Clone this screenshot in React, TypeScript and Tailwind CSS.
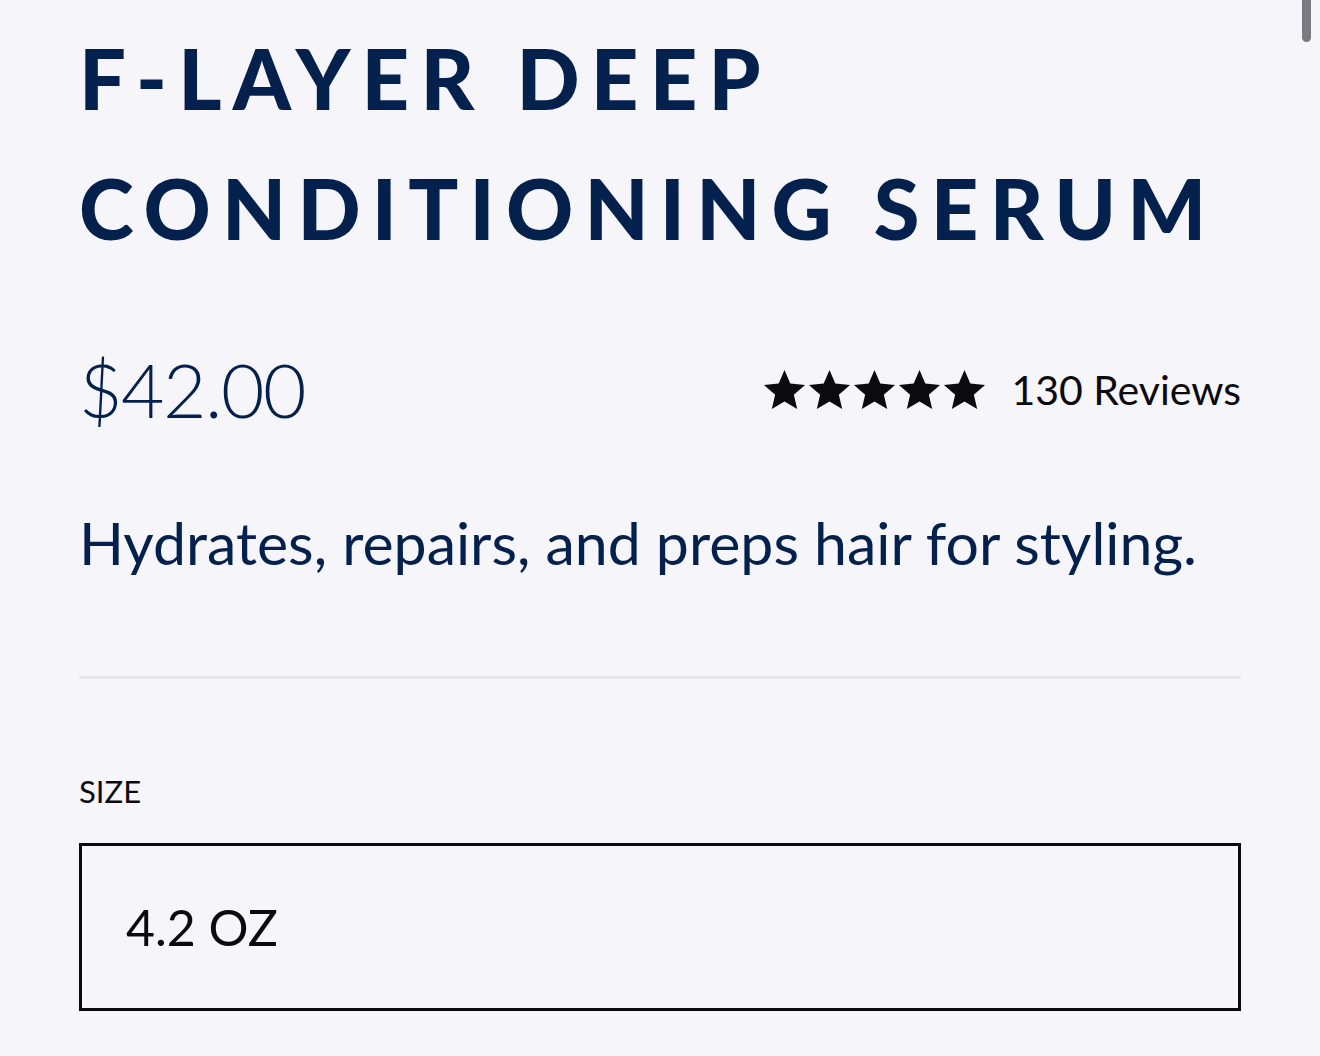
import React from "react";

const Star = () => (
  <svg viewBox="0 0 24 24" className="w-[45px] h-[45px]" fill="#0a0a0f">
    <path d="M12 1.6l3.09 7.26 7.86.7-5.96 5.2 1.78 7.7L12 18.4l-6.77 4.06 1.78-7.7-5.96-5.2 7.86-.7z" />
  </svg>
);

export default function App() {
  return (
    <div className="relative min-h-[1056px] w-full bg-[#f5f5fa] overflow-hidden" style={{ fontFamily: "Lato, 'Noto Sans', sans-serif" }}>
      <div className="absolute right-[9px] top-0 h-[42px] w-[9px] rounded-b-full bg-[#7a7a80]" />
      <div className="px-[79px] pt-[13px]">
        <h1 className="text-[#04214e] font-black uppercase text-[83px] leading-[130px] tracking-[0.135em]">
          F-Layer Deep<br />Conditioning Serum
        </h1>
        <div className="mt-[79px] flex items-center justify-between">
          <div className="text-[#04214e] font-light text-[75px] leading-none tracking-[-0.02em]">$42.00</div>
          <div className="flex items-center gap-[24px]">
            <div className="flex items-center">
              <Star /><Star /><Star /><Star /><Star />
            </div>
            <span className="text-[#0a0a0f] text-[41px] leading-none">130 Reviews</span>
          </div>
        </div>
        <p className="mt-[86px] text-[#04214e] text-[59px] leading-none whitespace-nowrap">
          Hydrates, repairs, and preps hair for styling.
        </p>
        <div className="mt-[104px] h-[3px] bg-[#e8e8ec]" />
        <div className="mt-[97px] text-[#0a0a0f] text-[31px] leading-none">SIZE</div>
        <div className="mt-[36px] h-[168px] border-[3px] border-[#0a0a0f] flex items-center pl-[44px]">
          <span className="text-[#0a0a0f] text-[50px] leading-none">4.2 OZ</span>
        </div>
      </div>
    </div>
  );
}
